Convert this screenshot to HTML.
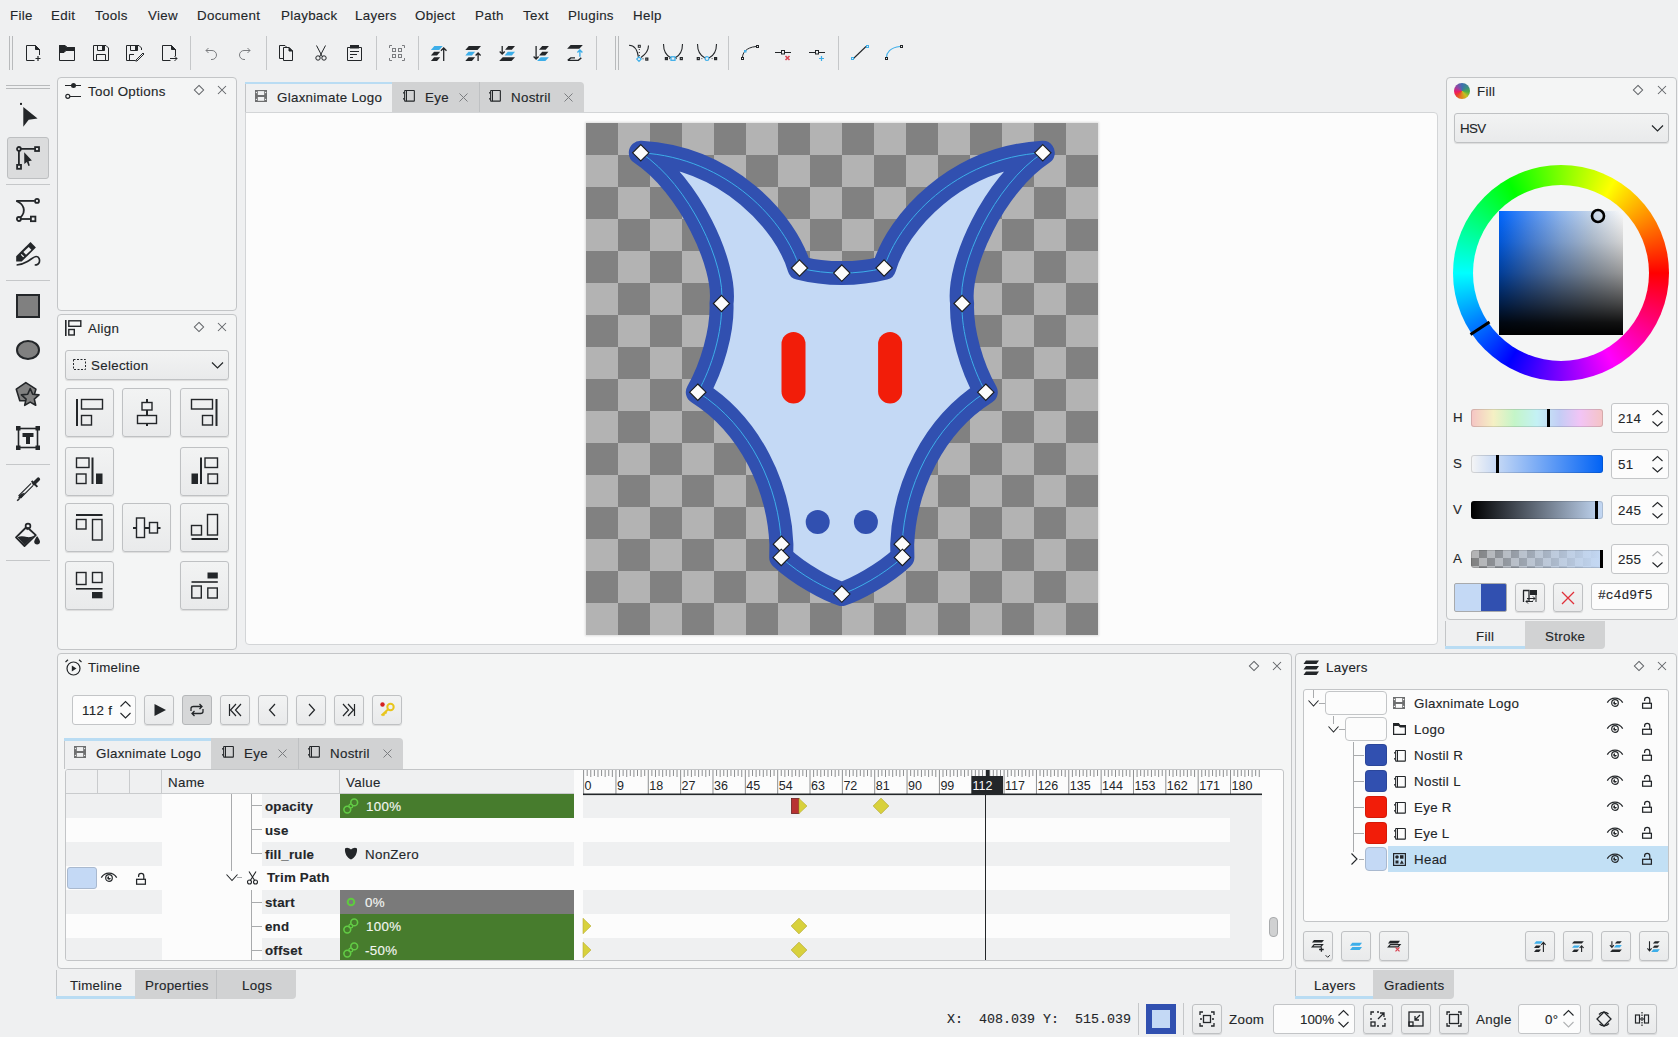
<!DOCTYPE html>
<html><head><meta charset="utf-8">
<style>
*{box-sizing:border-box;margin:0;padding:0}
html,body{width:1678px;height:1037px;overflow:hidden;background:#eff0f1;font-family:"Liberation Sans",sans-serif;font-size:13.33px;color:#232629}
.a{position:absolute}
.t{position:absolute;line-height:16px;white-space:nowrap;letter-spacing:0.3px;-webkit-text-stroke:0.12px currentColor}
.dock{position:absolute;background:#f4f5f5;border:1px solid #c3c5c7;border-radius:4px}
.btn{position:absolute;border:1px solid #bfc1c3;border-radius:3px;background:linear-gradient(#f2f3f3,#e9eaeb);box-shadow:0 1px 1px rgba(0,0,0,0.10)}
.tabi{position:absolute;background:#d1d2d3}
.sep{position:absolute;background:#c5c7c9;width:1px}
svg{position:absolute;overflow:visible}
.ic{fill:none;stroke:#232629;stroke-width:1}
</style></head><body>

<!-- MENU BAR -->
<div class="t" style="left:10px;top:8px">File</div>
<div class="t" style="left:51px;top:8px">Edit</div>
<div class="t" style="left:95px;top:8px">Tools</div>
<div class="t" style="left:148px;top:8px">View</div>
<div class="t" style="left:197px;top:8px">Document</div>
<div class="t" style="left:281px;top:8px">Playback</div>
<div class="t" style="left:355px;top:8px">Layers</div>
<div class="t" style="left:415px;top:8px">Object</div>
<div class="t" style="left:475px;top:8px">Path</div>
<div class="t" style="left:523px;top:8px">Text</div>
<div class="t" style="left:568px;top:8px">Plugins</div>
<div class="t" style="left:633px;top:8px">Help</div>


<!-- TOOLBAR -->
<div class="a" style="left:9px;top:36px;width:1px;height:34px;background:#b8babc"></div>
<div class="a" style="left:12px;top:36px;width:1px;height:34px;background:#b8babc"></div>
<div class="sep" style="left:190px;top:36px;height:34px"></div>
<div class="sep" style="left:266px;top:36px;height:34px"></div>
<div class="sep" style="left:376px;top:36px;height:34px"></div>
<div class="sep" style="left:418px;top:36px;height:34px"></div>
<div class="sep" style="left:596px;top:36px;height:34px"></div>
<div class="a" style="left:615px;top:36px;width:1px;height:34px;background:#b8babc"></div>
<div class="a" style="left:618px;top:36px;width:1px;height:34px;background:#b8babc"></div>
<div class="sep" style="left:728px;top:36px;height:34px"></div>
<div class="sep" style="left:838px;top:36px;height:34px"></div>

<svg style="left:26px;top:45px" width="16" height="16" viewBox="0 0 16 16" class="ic"><path d="M8.5 15.5H0.5V0.5H9.5L13.5 4.5V10"/><path d="M9.5 0.5V4.5H13.5Z" fill="#232629"/><path d="M12 11V16M9.5 13.5H14.5" stroke-width="1.2"/></svg>
<svg style="left:59px;top:45px" width="16" height="16" viewBox="0 0 16 16" class="ic"><path d="M0.5 15.5V0.5H6L8 2.5H15.5V15.5Z"/><path d="M0.5 0.5H6L8 2.5H15.5V5.5H7L5 7.5H0.5Z" fill="#232629"/></svg>
<svg style="left:93px;top:45px" width="16" height="16" viewBox="0 0 16 16" class="ic"><path d="M0.5 0.5H13L15.5 3V15.5H0.5Z"/><path d="M4.5 0.5V5.5H11.5V0.5"/><rect x="9" y="1" width="2.5" height="4.5" fill="#232629" stroke="none"/><path d="M3.5 15.5V9.5H12.5V15.5"/></svg>
<svg style="left:126px;top:45px" width="18" height="16" viewBox="0 0 18 16" class="ic"><path d="M9 15.5H0.5V0.5H13L15.5 3V5"/><path d="M4.5 0.5V5.5H11.5V0.5"/><rect x="9" y="1" width="2.5" height="4.5" fill="#232629" stroke="none"/><path d="M3.5 15.5V9.5H8"/><path d="M10 15L17 8L18 9L11 16L9.5 16Z" stroke-width="1"/></svg>
<svg style="left:162px;top:45px" width="16" height="16" viewBox="0 0 16 16" class="ic"><path d="M8.5 15.5H0.5V0.5H9.5L13.5 4.5V11"/><path d="M9.5 0.5V4.5H13.5Z" fill="#232629"/><path d="M8 13.5H15M12.5 11L15 13.5L12.5 16"/></svg>

<svg style="left:203px;top:45px" width="16" height="16" viewBox="0 0 16 16" class="ic" style="stroke:#7b7d80"><path d="M3 5.5H9A4.5 4.5 0 0 1 9 14.5H8M5.5 3L3 5.5L5.5 8" stroke="#7b7d80"/></svg>
<svg style="left:237px;top:45px" width="16" height="16" viewBox="0 0 16 16" class="ic"><path d="M13 5.5H7A4.5 4.5 0 0 0 7 14.5H8M10.5 3L13 5.5L10.5 8" stroke="#7b7d80"/></svg>

<svg style="left:279px;top:45px" width="16" height="16" viewBox="0 0 16 16" class="ic"><path d="M4.5 13.5H0.5V0.5H6L8 2.5"/><path d="M4.5 15.5V2.5H10L13.5 6V15.5Z"/><path d="M10 2.5V6H13.5Z" fill="#232629"/></svg>
<svg style="left:313px;top:45px" width="16" height="16" viewBox="0 0 16 16" class="ic"><path d="M3.5 0.5L9.5 12M12.5 0.5L6.5 12"/><circle cx="5" cy="13" r="2.2"/><circle cx="11" cy="13" r="2.2"/></svg>
<svg style="left:347px;top:45px" width="16" height="16" viewBox="0 0 16 16" class="ic"><path d="M0.5 2.5H14.5V15.5H0.5Z"/><rect x="3" y="0" width="9" height="3.5" fill="#232629" stroke="none"/><path d="M3 6.5H12M3 9.5H10M3 12.5H6"/></svg>
<svg style="left:389px;top:45px" width="16" height="16" viewBox="0 0 16 16" class="ic" stroke="#7b7d80"><path d="M0.5 3V0.5H3M13 0.5H15.5V3M15.5 13V15.5H13M3 15.5H0.5V13" stroke="#7b7d80"/><rect x="3.5" y="3.5" width="3" height="3" stroke="#7b7d80"/><rect x="9.5" y="3.5" width="3" height="3" stroke="#7b7d80"/><rect x="3.5" y="9.5" width="3" height="3" stroke="#7b7d80"/><rect x="9.5" y="9.5" width="3" height="3" stroke="#7b7d80"/></svg>

<svg style="left:425px;top:38px" width="170" height="30" viewBox="425 38 170 30"><path d="M434.4 46.0H442.7L439.2 50.0H430.9Z" fill="#3daee9"/><path d="M434.1 51.8H440.2L437.0 55.5H430.9Z" fill="#232629"/><path d="M434.1 57.3H440.2L437.0 61.0H430.9Z" fill="#232629"/><path d="M443.7 61.1V48M440.9 50.8L443.7 48L446.5 50.8" fill="none" stroke="#232629" stroke-width="1.3"/><path d="M468.8 46.0H481.0L477.5 50.0H465.3Z" fill="#232629"/><path d="M468.5 51.8H475.1L471.9 55.5H465.3Z" fill="#3daee9"/><path d="M468.5 57.3H475.1L471.9 61.0H465.3Z" fill="#232629"/><path d="M478.1 61.1V53M475.6 55.5L478.1 53L480.6 55.5" fill="none" stroke="#232629" stroke-width="1.3"/><path d="M508.3 46.0H515.0L511.8 49.8H505.1Z" fill="#232629"/><path d="M507.8 51.8H515.0L511.8 55.5H504.6Z" fill="#3daee9"/><path d="M502.7 57.3H515.0L511.5 61.0H499.2Z" fill="#232629"/><path d="M502.2 45.9V54M499.7 51.5L502.2 54L504.7 51.5" fill="none" stroke="#232629" stroke-width="1.3"/><path d="M542.2 46.0H548.9L545.7 49.8H539.0Z" fill="#232629"/><path d="M542.2 51.8H548.4L545.2 55.5H539.0Z" fill="#232629"/><path d="M540.6 57.3H548.9L545.4 61.0H537.1Z" fill="#3daee9"/><path d="M536.1 45.9V59M533.6 56.5L536.1 59L538.6 56.5" fill="none" stroke="#232629" stroke-width="1.3"/><path d="M570.6 45.0H582.8L579.3 48.8H567.1Z" fill="#232629"/><path d="M567.8 60.4L570.8 57.9H575M581.3 57.9L578.3 60.4H567.8" fill="none" stroke="#232629" stroke-width="1.4"/><path d="M579.9 56.7V50M577.4 52.5L579.9 50L582.4 52.5" fill="none" stroke="#3daee9" stroke-width="1.4"/></svg>
<svg style="left:625px;top:38px" width="100" height="30" viewBox="625 38 100 30" fill="none" stroke="#232629" stroke-width="1.1">
<path d="M629 45.3C634 45.3 637.5 50 638.5 57.5"/><path d="M641 57.5C646 54 648.5 50 648.5 45.5"/>
<rect x="638.3" y="45.3" width="2" height="2" stroke-width="1"/><path d="M639.3 49V50M639.3 52V53M639.3 55V56" stroke-width="1"/>
<path d="M639 56.9L641.2 59.1L639 61.3L636.8 59.1Z" stroke="#3daee9" stroke-width="1.2"/>
<path d="M642.5 58.8H643.5" stroke-width="1"/><rect x="645.8" y="58.1" width="2" height="2" stroke-width="1.2"/>
<path d="M663.5 44C663.5 50 666 55.5 671 58M682.5 44C682.5 50 680 55.5 675 58"/>
<rect x="671" y="56.8" width="4" height="3.5" stroke="#3daee9" stroke-width="1.3"/>
<rect x="665.4" y="57.6" width="2" height="2" stroke-width="1.2"/><rect x="680.3" y="57.6" width="2" height="2" stroke-width="1.2"/>
<path d="M669 58.6H669.8M676.3 58.6H677" stroke-width="1"/>
<path d="M697.5 44C697.5 50 700 55.5 705 58M716.5 44C716.5 50 714 55.5 709 58"/>
<circle cx="707" cy="58.6" r="1.9" stroke="#3daee9" stroke-width="1.2"/>
<rect x="697.3" y="57.6" width="2" height="2" stroke-width="1.2"/><rect x="714.6" y="57.6" width="2" height="2" stroke-width="1.2"/>
<path d="M701.5 58.6H702.3M711.7 58.6H712.5" stroke-width="1"/>
</svg>
<svg style="left:741px;top:45px" width="18" height="16" viewBox="0 0 18 16" class="ic"><path d="M1.5 12.5C1.5 8 5 2.5 15 1.5"/><rect x="0.5" y="12.5" width="2" height="2" stroke-width="1"/><rect x="15.5" y="0.5" width="2" height="2"/><rect x="3.5" y="5.5" width="1.5" height="1.5" stroke="#3daee9"/></svg>
<svg style="left:775px;top:46px" width="18" height="16" viewBox="0 0 18 16" class="ic"><path d="M0 6.5H6M10 6.5H16"/><rect x="6.5" y="4.5" width="3" height="3.5"/><path d="M10.5 10L14.5 14M14.5 10L10.5 14" stroke="#da4453" stroke-width="1.6"/></svg>
<svg style="left:809px;top:46px" width="18" height="16" viewBox="0 0 18 16" class="ic"><path d="M0 6.5H6M10 6.5H16"/><rect x="6.5" y="4.5" width="3" height="3.5"/><path d="M12.5 10V15M10 12.5H15" stroke="#3daee9" stroke-width="1.2"/></svg>

<svg style="left:851px;top:45px" width="18" height="16" viewBox="0 0 18 16" class="ic"><path d="M2.5 13.5L15 1.5" stroke-width="1.1"/><rect x="0.5" y="12.5" width="2" height="2" stroke="#3daee9"/><rect x="15.5" y="0.5" width="2" height="2" stroke="#3daee9"/></svg>
<svg style="left:885px;top:45px" width="18" height="16" viewBox="0 0 18 16" class="ic"><path d="M1.5 12.5C1.5 8 5 2.5 15 1.5" stroke="#3daee9" stroke-width="1.1"/><rect x="0.5" y="12.5" width="2" height="2"/><rect x="15.5" y="0.5" width="2" height="2"/></svg>


<!-- LEFT TOOLBOX -->
<div class="a" style="left:6px;top:85px;width:44px;height:1px;background:#b8babc"></div>
<div class="a" style="left:6px;top:88px;width:44px;height:1px;background:#b8babc"></div>
<svg style="left:12px;top:100px" width="32" height="32" viewBox="0 0 32 32"><rect x="8" y="2.9" width="2" height="2" fill="#232629"/><path d="M11.3 7.1L25.6 18.5L16.7 19.75L11.3 26.7Z" fill="#232629"/></svg>
<div class="a" style="left:7px;top:137px;width:42px;height:42px;background:#dbdcdd;border:1px solid #bdbfc1;border-radius:3px"></div>
<svg style="left:12px;top:142px" width="32" height="32" viewBox="0 0 32 32" fill="none" stroke="#232629" stroke-width="1.8"><circle cx="6.9" cy="6.9" r="1.9"/><path d="M8.8 6.9H23M6.9 8.8V23"/><rect x="23.1" y="5.1" width="3.9" height="3.9"/><rect x="5.1" y="22.9" width="3.9" height="3.9"/><path d="M12.2 10.3L19.9 18.5L16.6 19.2L17.8 23.4L16.4 23.9L14.9 19.9L12.3 22Z" fill="#232629" stroke="none"/></svg>
<div class="a" style="left:6px;top:184px;width:44px;height:1px;background:#c5c7c9"></div>
<svg style="left:12px;top:194px" width="32" height="32" viewBox="0 0 32 32" fill="none" stroke="#232629" stroke-width="1.8"><path d="M4.3 6.9H22.6"/><circle cx="25" cy="6.9" r="2"/><path d="M4.3 7C11.5 9.8 15 17 8.3 23.6"/><circle cx="6.9" cy="25" r="2"/><path d="M9 25H18.8"/><rect x="18.9" y="22.6" width="4.5" height="4.6"/></svg>
<svg style="left:12px;top:238px" width="32" height="32" viewBox="0 0 32 32"><path d="M4.2 18.2L18.5 4L23.9 9.6L9.7 23.6H4.2Z" fill="#232629"/><path d="M16.7 9L19.4 11.7L14 16.8L11.4 14Z" fill="#eff0f1"/><path d="M9.6 16L12.2 18.5L11.1 19.3L8.8 16.8Z" fill="#eff0f1"/><path d="M4.6 27C9 26.8 12 25.5 15.4 23.5C19 21.5 22 18.5 24.1 18.5C27 18.5 28 21.6 27.4 24C26.8 26.2 25 27 22.7 27" fill="none" stroke="#232629" stroke-width="1.7"/></svg>
<div class="a" style="left:6px;top:280px;width:44px;height:1px;background:#c5c7c9"></div>
<div class="a" style="left:16px;top:294px;width:24px;height:24px;background:#808080;border:2px solid #232629"></div>
<svg style="left:16px;top:339px" width="24" height="22" viewBox="0 0 24 22"><ellipse cx="12" cy="11" rx="11" ry="9" fill="#808080" stroke="#232629" stroke-width="2"/></svg>
<svg style="left:15px;top:381px" width="26" height="26" viewBox="0 0 26 26"><path d="M10.8 1.6L20.9 8.2L17.5 19.8H4.8L1.3 8.2Z" fill="#808080" stroke="#232629" stroke-width="1.6" stroke-linejoin="round"/><path d="M15.2 7.5L17.7 13.3L24.0 13.9L19.3 18.1L20.7 24.3L15.2 21.1L9.7 24.3L11.1 18.1L6.4 13.9L12.7 13.3Z" fill="#808080" stroke="#232629" stroke-width="1.6" stroke-linejoin="round"/></svg>
<svg style="left:15px;top:425px" width="26" height="26" viewBox="0 0 26 26"><rect x="3.5" y="3.5" width="19" height="19" fill="none" stroke="#232629" stroke-width="1.6"/><rect x="1" y="1" width="4.5" height="4.5" fill="#232629"/><rect x="20.5" y="1" width="4.5" height="4.5" fill="#232629"/><rect x="1" y="20.5" width="4.5" height="4.5" fill="#232629"/><rect x="20.5" y="20.5" width="4.5" height="4.5" fill="#232629"/><path d="M7.5 8H18.5V12H15V19H11V12H7.5Z" fill="#232629"/></svg>
<div class="a" style="left:6px;top:464px;width:44px;height:1px;background:#c5c7c9"></div>
<svg style="left:12px;top:474px" width="32" height="32" viewBox="12 474 32 32"><path d="M34 483.5L38.3 479.2" stroke="#232629" stroke-width="3.6" stroke-linecap="round"/><path d="M31.6 481L37.4 486.8" stroke="#232629" stroke-width="1.9"/><path d="M33.2 485.4L21 497.6L18.9 495.5L31.1 483.3" fill="none" stroke="#232629" stroke-width="1.1"/><path d="M24.5 492.5L21.5 497.8L19.4 499L18.2 497.7L19.4 495.6Z" fill="#232629"/><path d="M20.5 494.5C22 493.5 23.5 493 25 493L21.3 497.4Z" fill="#232629"/><path d="M17.2 500.8L19.3 498.7" stroke="#232629" stroke-width="1.6"/></svg>
<svg style="left:12px;top:518px" width="32" height="32" viewBox="12 518 32 32"><circle cx="28" cy="526" r="2.4" fill="none" stroke="#232629" stroke-width="1.7"/><path d="M26.5 529.5L28 528L35.8 535.2L24.5 546L16 537.3L26.5 527" fill="none" stroke="#232629" stroke-width="1.8" stroke-linejoin="round"/><path d="M17.5 537.3C21 535.5 24 536.5 27 537C30 537.5 32 536.5 34.2 535.8L24.5 545Z" fill="#232629"/><path d="M37.1 536C37.1 536 34.2 540 34.2 541.8C34.2 543.5 35.5 544.6 37.1 544.6C38.7 544.6 40 543.5 40 541.8C40 540 37.1 536 37.1 536Z" fill="#232629"/></svg>
<div class="a" style="left:6px;top:560px;width:44px;height:1px;background:#c5c7c9"></div>

<!-- TOOL OPTIONS DOCK -->
<div class="dock" style="left:57px;top:77px;width:180px;height:234px"></div>
<div class="t" style="left:88px;top:84px">Tool Options</div>
<svg style="left:65px;top:82px" width="17" height="17" viewBox="0 0 17 17"><path d="M0 3.5H16M4 14.5H16" stroke="#232629" stroke-width="1.2"/><circle cx="8.5" cy="3.5" r="2.5" fill="#232629"/><circle cx="2.8" cy="14.3" r="2" fill="#f4f5f5" stroke="#232629" stroke-width="1.2"/></svg>
<svg style="left:194px;top:85px" width="10" height="10" viewBox="0 0 10 10"><path d="M5 0.4L9.6 5L5 9.6L0.4 5Z" fill="none" stroke="#5f6266" stroke-width="1.05"/></svg>
<svg style="left:217px;top:85px" width="10" height="10" viewBox="0 0 10 10"><path d="M1 1L9 9M9 1L1 9" stroke="#5f6266" stroke-width="1.05"/></svg>


<!-- ALIGN DOCK -->
<div class="dock" style="left:57px;top:314px;width:180px;height:336px"></div>
<div class="t" style="left:88px;top:321px">Align</div>
<svg style="left:65px;top:319px" width="17" height="17" viewBox="0 0 17 17"><rect x="0" y="1" width="1.6" height="16" fill="#232629"/><rect x="3.8" y="1.8" width="12" height="5.5" fill="none" stroke="#232629" stroke-width="1.4"/><rect x="3.8" y="10.5" width="5.5" height="5.5" fill="none" stroke="#232629" stroke-width="1.4"/></svg>
<svg style="left:194px;top:322px" width="10" height="10" viewBox="0 0 10 10"><path d="M5 0.4L9.6 5L5 9.6L0.4 5Z" fill="none" stroke="#5f6266" stroke-width="1.05"/></svg>
<svg style="left:217px;top:322px" width="10" height="10" viewBox="0 0 10 10"><path d="M1 1L9 9M9 1L1 9" stroke="#5f6266" stroke-width="1.05"/></svg>
<div class="btn" style="left:65px;top:350px;width:164px;height:30px"></div>
<svg style="left:73px;top:359px" width="14" height="12" viewBox="0 0 14 12"><rect x="0.5" y="0.5" width="12" height="10" fill="none" stroke="#232629" stroke-width="1" stroke-dasharray="2 1.5"/></svg>
<div class="t" style="left:91px;top:358px">Selection</div>
<svg style="left:211px;top:361px" width="13" height="9" viewBox="0 0 13 9"><path d="M1 1.5L6.5 7L12 1.5" fill="none" stroke="#232629" stroke-width="1.2"/></svg>
<div class="btn" style="left:65px;top:388px;width:49px;height:49px"></div><svg style="left:65px;top:388px" width="49" height="49" viewBox="0 0 49 49"><rect x="11" y="11" width="2" height="27" fill="#232629"/><rect x="16.5" y="11.5" width="21" height="9.5" fill="none" stroke="#232629" stroke-width="1.4"/><rect x="16.5" y="27.5" width="10" height="9.5" fill="none" stroke="#232629" stroke-width="1.4"/></svg>
<div class="btn" style="left:122px;top:388px;width:49px;height:49px"></div><svg style="left:122px;top:388px" width="49" height="49" viewBox="0 0 49 49"><rect x="24" y="11" width="2" height="27" fill="#232629"/><rect x="20" y="14.5" width="10" height="7.5" fill="#f0f1f2" fill="none" stroke="#232629" stroke-width="1.4"/><rect x="15.5" y="27.5" width="19" height="8" fill="#eeeff0" fill="none" stroke="#232629" stroke-width="1.4"/></svg>
<div class="btn" style="left:180px;top:388px;width:49px;height:49px"></div><svg style="left:180px;top:388px" width="49" height="49" viewBox="0 0 49 49"><rect x="35.5" y="11" width="2" height="27" fill="#232629"/><rect x="11.5" y="11.5" width="21" height="9.5" fill="none" stroke="#232629" stroke-width="1.4"/><rect x="22.5" y="27.5" width="10" height="9.5" fill="none" stroke="#232629" stroke-width="1.4"/></svg>
<div class="btn" style="left:65px;top:447px;width:49px;height:49px"></div><svg style="left:65px;top:447px" width="49" height="49" viewBox="0 0 49 49"><rect x="11.5" y="11" width="12.5" height="9.5" fill="none" stroke="#232629" stroke-width="1.4"/><rect x="11.5" y="27" width="9.5" height="9.5" fill="none" stroke="#232629" stroke-width="1.4"/><rect x="26.5" y="10.5" width="2" height="26.5" fill="#232629"/><rect x="31" y="26.5" width="6.5" height="10.5" fill="#232629"/></svg>
<div class="btn" style="left:180px;top:447px;width:49px;height:49px"></div><svg style="left:180px;top:447px" width="49" height="49" viewBox="0 0 49 49"><rect x="11.5" y="26.5" width="6.5" height="10.5" fill="#232629"/><rect x="20" y="10.5" width="2" height="26.5" fill="#232629"/><rect x="25" y="11" width="12.5" height="9.5" fill="none" stroke="#232629" stroke-width="1.4"/><rect x="28" y="27" width="9.5" height="9.5" fill="none" stroke="#232629" stroke-width="1.4"/></svg>
<div class="btn" style="left:65px;top:503px;width:49px;height:49px"></div><svg style="left:65px;top:503px" width="49" height="49" viewBox="0 0 49 49"><rect x="11" y="11" width="26.5" height="2" fill="#232629"/><rect x="11.5" y="16.5" width="9.5" height="9.5" fill="none" stroke="#232629" stroke-width="1.4"/><rect x="27.5" y="16.5" width="9.5" height="20.5" fill="none" stroke="#232629" stroke-width="1.4"/></svg>
<div class="btn" style="left:122px;top:503px;width:49px;height:49px"></div><svg style="left:122px;top:503px" width="49" height="49" viewBox="0 0 49 49"><rect x="11" y="24" width="27.5" height="2" fill="#232629"/><rect x="14.5" y="15" width="8" height="19.5" fill="#f0f1f2" fill="none" stroke="#232629" stroke-width="1.4"/><rect x="27.5" y="19.5" width="8" height="10.5" fill="#eeeff0" fill="none" stroke="#232629" stroke-width="1.4"/></svg>
<div class="btn" style="left:180px;top:503px;width:49px;height:49px"></div><svg style="left:180px;top:503px" width="49" height="49" viewBox="0 0 49 49"><rect x="11.5" y="35" width="26.5" height="2" fill="#232629"/><rect x="11.5" y="22.5" width="10" height="9.5" fill="none" stroke="#232629" stroke-width="1.4"/><rect x="27.5" y="11.5" width="10" height="20.5" fill="none" stroke="#232629" stroke-width="1.4"/></svg>
<div class="btn" style="left:65px;top:561px;width:49px;height:49px"></div><svg style="left:65px;top:561px" width="49" height="49" viewBox="0 0 49 49"><rect x="11.5" y="11.5" width="9.5" height="12" fill="none" stroke="#232629" stroke-width="1.4"/><rect x="27.5" y="11.5" width="9.5" height="10" fill="none" stroke="#232629" stroke-width="1.4"/><rect x="11" y="27" width="26.5" height="1.6" fill="#232629"/><rect x="27" y="31" width="10.5" height="6.3" fill="#232629"/></svg>
<div class="btn" style="left:180px;top:561px;width:49px;height:49px"></div><svg style="left:180px;top:561px" width="49" height="49" viewBox="0 0 49 49"><rect x="27.5" y="11.5" width="10.3" height="6" fill="#232629"/><rect x="11.5" y="20.2" width="26.3" height="1.6" fill="#232629"/><rect x="11.8" y="25" width="9.5" height="12" fill="none" stroke="#232629" stroke-width="1.4"/><rect x="27.8" y="27" width="9.5" height="10" fill="none" stroke="#232629" stroke-width="1.4"/></svg>


<!-- CANVAS TABS -->
<div class="a" style="left:245px;top:82px;width:147px;height:31px;background:#eff0f1;border-left:1px solid #c3c5c7"></div>
<div class="a" style="left:245px;top:82px;width:147px;height:2px;background:#b9dcf3"></div>
<div class="tabi" style="left:392px;top:82px;width:192px;height:31px;border-radius:0 4px 0 0"></div>
<div class="a" style="left:479px;top:82px;width:1px;height:31px;background:#bfc1c3"></div>
<div class="t" style="left:277px;top:90px">Glaxnimate Logo</div><svg style="left:255px;top:90px" width="12" height="12" viewBox="0 0 12 12"><rect x="0" y="0" width="12" height="12" fill="#6e6f70"/><rect x="2.8" y="1.1" width="6.4" height="3.9" fill="#eff0f1"/><rect x="2.8" y="7" width="6.4" height="3.8" fill="#eff0f1"/><circle cx="1.4" cy="2.5" r="0.65" fill="#eff0f1"/><circle cx="1.4" cy="9.4" r="0.65" fill="#eff0f1"/><circle cx="10.6" cy="2.5" r="0.65" fill="#eff0f1"/><circle cx="10.6" cy="9.4" r="0.65" fill="#eff0f1"/></svg><svg style="left:402px;top:90px" width="13" height="12" viewBox="0 0 13 12"><rect x="2.65" y="0.55" width="9.7" height="10.6" rx="0.4" fill="none" stroke="#232629" stroke-width="1.1"/><path d="M4.5 0.5V11.2" stroke="#232629" stroke-width="1"/><rect x="1" y="2.2" width="1.4" height="1.3" fill="#232629"/><rect x="1" y="8.2" width="1.4" height="1.3" fill="#232629"/></svg><svg style="left:459px;top:93px" width="9" height="9" viewBox="0 0 9 9"><path d="M0.5 0.5L8.5 8.5M8.5 0.5L0.5 8.5" stroke="#7b7d80" stroke-width="1"/></svg><svg style="left:488px;top:90px" width="13" height="12" viewBox="0 0 13 12"><rect x="2.65" y="0.55" width="9.7" height="10.6" rx="0.4" fill="none" stroke="#232629" stroke-width="1.1"/><path d="M4.5 0.5V11.2" stroke="#232629" stroke-width="1"/><rect x="1" y="2.2" width="1.4" height="1.3" fill="#232629"/><rect x="1" y="8.2" width="1.4" height="1.3" fill="#232629"/></svg><svg style="left:564px;top:93px" width="9" height="9" viewBox="0 0 9 9"><path d="M0.5 0.5L8.5 8.5M8.5 0.5L0.5 8.5" stroke="#7b7d80" stroke-width="1"/></svg>
<div class="t" style="left:425px;top:90px">Eye</div>
<div class="t" style="left:511px;top:90px">Nostril</div>

<!-- CANVAS VIEW -->
<div class="a" style="left:245px;top:112px;width:1193px;height:533px;background:#fcfcfc;border:1px solid #d3d5d7;border-radius:0 4px 4px 4px"></div>


<!-- CANVAS -->
<div class="a" style="left:586px;top:123px;width:512px;height:512px;box-shadow:0 0 2px 1px rgba(0,0,0,0.12)"></div>
<svg style="left:586px;top:123px" width="512" height="512" viewBox="0 0 512 512">
<defs><pattern id="chk" width="64" height="64" patternUnits="userSpaceOnUse"><rect width="64" height="64" fill="#b3b3b3"/><rect width="32" height="32" fill="#818181"/><rect x="32" y="32" width="32" height="32" fill="#818181"/></pattern></defs>
<rect width="512" height="512" fill="url(#chk)"/>
<path d="M255.8 150.1C242.0 150.1 227.0 148.5 213.5 145.0C200.1 99.6 142.4 34.8 54.8 29.8C103.4 61.7 140.5 142.2 135.5 180.5C136.6 208.1 125.9 244.5 111.8 269.2C165.3 303.0 193.1 365.0 195.4 421.2L195.2 434.4C214.2 452.0 242.0 466.7 255.8 471.1C269.6 466.7 297.4 452.0 316.4 434.4L316.2 421.2C318.5 365.0 346.3 303.0 399.8 269.2C385.7 244.5 375.0 208.1 376.1 180.5C371.1 142.2 408.2 61.7 456.8 29.8C369.2 34.8 311.5 99.6 298.1 145.0C284.6 148.5 269.6 150.1 255.8 150.1Z" fill="#c4d9f5" stroke="#3150b0" stroke-width="24" stroke-linejoin="round"/>
<rect x="195.5" y="209" width="24" height="71.5" rx="12" fill="#f21d09"/>
<rect x="292.1" y="209" width="24" height="71.5" rx="12" fill="#f21d09"/>
<circle cx="231.7" cy="398.9" r="12" fill="#3150b0"/>
<circle cx="279.9" cy="398.9" r="12" fill="#3150b0"/>
<path d="M255.8 150.1C242.0 150.1 227.0 148.5 213.5 145.0C200.1 99.6 142.4 34.8 54.8 29.8C103.4 61.7 140.5 142.2 135.5 180.5C136.6 208.1 125.9 244.5 111.8 269.2C165.3 303.0 193.1 365.0 195.4 421.2L195.2 434.4C214.2 452.0 242.0 466.7 255.8 471.1C269.6 466.7 297.4 452.0 316.4 434.4L316.2 421.2C318.5 365.0 346.3 303.0 399.8 269.2C385.7 244.5 375.0 208.1 376.1 180.5C371.1 142.2 408.2 61.7 456.8 29.8C369.2 34.8 311.5 99.6 298.1 145.0C284.6 148.5 269.6 150.1 255.8 150.1Z" fill="none" stroke="#3daee9" stroke-width="1"/>
<g fill="#fcfcfc" stroke="#1a1c1e" stroke-width="1.1"><path d="M255.8 141.9L264.0 150.1L255.8 158.3L247.6 150.1Z"/><path d="M213.5 136.8L221.7 145.0L213.5 153.2L205.3 145.0Z"/><path d="M54.8 21.6L63.0 29.8L54.8 38.0L46.6 29.8Z"/><path d="M135.5 172.3L143.7 180.5L135.5 188.7L127.3 180.5Z"/><path d="M111.8 261.0L120.0 269.2L111.8 277.4L103.6 269.2Z"/><path d="M195.4 413.0L203.6 421.2L195.4 429.4L187.2 421.2Z"/><path d="M195.2 426.2L203.4 434.4L195.2 442.6L187.0 434.4Z"/><path d="M255.8 462.9L264.0 471.1L255.8 479.3L247.6 471.1Z"/><path d="M298.1 136.8L306.3 145.0L298.1 153.2L289.9 145.0Z"/><path d="M456.8 21.6L465.0 29.8L456.8 38.0L448.6 29.8Z"/><path d="M376.1 172.3L384.3 180.5L376.1 188.7L367.9 180.5Z"/><path d="M399.8 261.0L408.0 269.2L399.8 277.4L391.6 269.2Z"/><path d="M316.2 413.0L324.4 421.2L316.2 429.4L308.0 421.2Z"/><path d="M316.4 426.2L324.6 434.4L316.4 442.6L308.2 434.4Z"/></g>
</svg>

<!-- FILL DOCK -->
<div class="dock" style="left:1446px;top:77px;width:231px;height:543px"></div>
<div class="t" style="left:1477px;top:84px">Fill</div>
<div class="a" style="left:1454px;top:83px;width:16px;height:16px;border-radius:50%;background:conic-gradient(from 0deg,#3d6fb0,#3a8f80 60deg,#52b043 100deg,#c8c020 140deg,#e08020 190deg,#e84030 230deg,#f01860 260deg,#a040a0 300deg,#3d6fb0 360deg)"></div>
<svg style="left:1633px;top:85px" width="10" height="10" viewBox="0 0 10 10"><path d="M5 0.4L9.6 5L5 9.6L0.4 5Z" fill="none" stroke="#5f6266" stroke-width="1.05"/></svg>
<svg style="left:1657px;top:85px" width="10" height="10" viewBox="0 0 10 10"><path d="M1 1L9 9M9 1L1 9" stroke="#5f6266" stroke-width="1.05"/></svg>
<div class="btn" style="left:1454px;top:113px;width:215px;height:30px"></div>
<div class="t" style="left:1460px;top:121px;letter-spacing:-0.6px">HSV</div>
<svg style="left:1651px;top:124px" width="13" height="9" viewBox="0 0 13 9"><path d="M1 1.5L6.5 7L12 1.5" fill="none" stroke="#232629" stroke-width="1.2"/></svg>
<div class="a" style="left:1453px;top:165px;width:216px;height:216px;border-radius:50%;background:conic-gradient(from 90deg,#f00,#f0f,#00f,#0ff,#0f0,#ff0,#f00)"></div>
<div class="a" style="left:1473px;top:185px;width:176px;height:176px;border-radius:50%;background:#f4f5f5"></div>
<div class="a" style="left:1499px;top:211px;width:124px;height:124px;background:linear-gradient(to bottom,rgba(0,0,0,0),rgba(0,0,0,0.16) 25%,rgba(0,0,0,0.4) 50%,rgba(0,0,0,0.72) 75%,rgba(0,0,0,0.93) 90%,#000),linear-gradient(to right,#0066ff,#4d8ef2 25%,#8fb6ee 50%,#c6d6ea 75%,#fafafa)"></div>
<svg style="left:1440px;top:150px" width="238" height="240" viewBox="1440 150 238 240"><circle cx="1598" cy="216" r="6" fill="none" stroke="#000" stroke-width="2.6"/><path d="M1470.5 334.5L1489.5 322" stroke="#000" stroke-width="3"/></svg>

<div class="t" style="left:1453px;top:410px">H</div>
<div class="t" style="left:1453px;top:456px">S</div>
<div class="t" style="left:1453px;top:502px">V</div>
<div class="t" style="left:1453px;top:551px">A</div>
<div class="a" style="left:1471px;top:409px;width:132px;height:18px;border-radius:3px;box-shadow:inset 0 0 0 1px rgba(0,0,0,0.13);background:linear-gradient(to right,#f5c4c4,#f5f0c4 17%,#c4f5c8 33%,#c4f1f5 50%,#c4cdf5 67%,#f2c4f5 83%,#f5c4c4)"></div>
<div class="a" style="left:1547px;top:409px;width:3px;height:18px;background:#000"></div>
<div class="a" style="left:1471px;top:455px;width:132px;height:18px;border-radius:3px;box-shadow:inset 0 0 0 1px rgba(0,0,0,0.13);background:linear-gradient(to right,#f5f5f5,#0062f5)"></div>
<div class="a" style="left:1496px;top:455px;width:3px;height:18px;background:#000"></div>
<div class="a" style="left:1471px;top:501px;width:132px;height:18px;border-radius:3px;box-shadow:inset 0 0 0 1px rgba(0,0,0,0.13);background:linear-gradient(to right,#000,#c4d9f5)"></div>
<div class="a" style="left:1595px;top:501px;width:3px;height:18px;background:#000"></div>
<div class="a" style="left:1471px;top:550px;width:132px;height:18px;border-radius:3px;box-shadow:inset 0 0 0 1px rgba(0,0,0,0.13);background:linear-gradient(to right,rgba(196,217,245,0),#c4d9f5),conic-gradient(#808080 25%,#b3b3b3 25% 50%,#808080 50% 75%,#b3b3b3 75%) 0 0/16px 16px"></div>
<div class="a" style="left:1600px;top:550px;width:3px;height:18px;background:#000"></div>
<div class="a" style="left:1611px;top:403px;width:58px;height:30px;background:#fcfcfc;border:1px solid #c3c5c7;border-radius:3px"></div><div class="t" style="left:1618px;top:411px">214</div><svg style="left:1651px;top:409px" width="13" height="19" viewBox="0 0 13 19"><path d="M1.5 6L6.5 1.5L11.5 6" fill="none" stroke="#232629" stroke-width="1.1"/><path d="M1.5 12.5L6.5 17L11.5 12.5" fill="none" stroke="#232629" stroke-width="1.1"/></svg>
<div class="a" style="left:1611px;top:449px;width:58px;height:30px;background:#fcfcfc;border:1px solid #c3c5c7;border-radius:3px"></div><div class="t" style="left:1618px;top:457px">51</div><svg style="left:1651px;top:455px" width="13" height="19" viewBox="0 0 13 19"><path d="M1.5 6L6.5 1.5L11.5 6" fill="none" stroke="#232629" stroke-width="1.1"/><path d="M1.5 12.5L6.5 17L11.5 12.5" fill="none" stroke="#232629" stroke-width="1.1"/></svg>
<div class="a" style="left:1611px;top:495px;width:58px;height:30px;background:#fcfcfc;border:1px solid #c3c5c7;border-radius:3px"></div><div class="t" style="left:1618px;top:503px">245</div><svg style="left:1651px;top:501px" width="13" height="19" viewBox="0 0 13 19"><path d="M1.5 6L6.5 1.5L11.5 6" fill="none" stroke="#232629" stroke-width="1.1"/><path d="M1.5 12.5L6.5 17L11.5 12.5" fill="none" stroke="#232629" stroke-width="1.1"/></svg>
<div class="a" style="left:1611px;top:544px;width:58px;height:30px;background:#fcfcfc;border:1px solid #c3c5c7;border-radius:3px"></div><div class="t" style="left:1618px;top:552px">255</div><svg style="left:1651px;top:550px" width="13" height="19" viewBox="0 0 13 19"><path d="M1.5 6L6.5 1.5L11.5 6" fill="none" stroke="#b0b2b4" stroke-width="1.1"/><path d="M1.5 12.5L6.5 17L11.5 12.5" fill="none" stroke="#232629" stroke-width="1.1"/></svg>

<div class="a" style="left:1454px;top:583px;width:53px;height:29px;border:1px solid #a8aaac;border-radius:2px;background:linear-gradient(to right,#c4d9f5 50%,#3150b0 50%)"></div>
<div class="btn" style="left:1515px;top:583px;width:30px;height:29px"></div>
<svg style="left:1522px;top:589px" width="16" height="16" viewBox="0 0 16 16"><path d="M1 1.5H7V13M1.5 1.5V13" fill="none" stroke="#232629" stroke-width="1.3"/><rect x="8" y="1" width="7" height="5" fill="#232629"/><path d="M14 1.5V13M5 9.5H13M11 7.5L13 9.5L11 11.5M11 12.5H4M6 10.5L4 12.5L6 14.5" fill="none" stroke="#232629" stroke-width="1"/></svg>
<div class="btn" style="left:1553px;top:583px;width:30px;height:29px"></div>
<svg style="left:1560px;top:590px" width="16" height="16" viewBox="0 0 16 16"><path d="M2 2L14 14M14 2L2 14" stroke="#e0303a" stroke-width="1.3"/></svg>
<div class="a" style="left:1591px;top:583px;width:78px;height:27px;background:#fcfcfc;border:1px solid #c3c5c7;border-radius:3px"></div>
<div class="t" style="left:1598px;top:588px;font-family:'Liberation Mono',monospace;font-size:13px;letter-spacing:0">#c4d9f5</div>
<div class="a" style="left:1445px;top:621px;width:80px;height:28px;background:#eff0f1;border-left:1px solid #c3c5c7"></div>
<div class="a" style="left:1445px;top:646px;width:80px;height:3px;background:#b9dcf3"></div>
<div class="tabi" style="left:1525px;top:621px;width:80px;height:28px;border-radius:0 0 4px 0"></div>
<div class="t" style="left:1476px;top:629px">Fill</div>
<div class="t" style="left:1545px;top:629px">Stroke</div>


<!-- TIMELINE DOCK -->
<div class="dock" style="left:57px;top:653px;width:1235px;height:316px"></div>
<div class="t" style="left:88px;top:660px">Timeline</div>
<svg style="left:65px;top:659px" width="17" height="17" viewBox="0 0 17 17"><circle cx="8.5" cy="9.5" r="6.5" fill="none" stroke="#232629" stroke-width="1.2"/><path d="M6.8 6.5L11.5 9.5L6.8 12.5Z" fill="#232629"/><path d="M0.5 3L3 0.8M16.5 3L14 0.8" stroke="#232629" stroke-width="1.2"/></svg>
<svg style="left:1249px;top:661px" width="10" height="10" viewBox="0 0 10 10"><path d="M5 0.4L9.6 5L5 9.6L0.4 5Z" fill="none" stroke="#5f6266" stroke-width="1.05"/></svg>
<svg style="left:1272px;top:661px" width="10" height="10" viewBox="0 0 10 10"><path d="M1 1L9 9M9 1L1 9" stroke="#5f6266" stroke-width="1.05"/></svg>
<div class="a" style="left:72px;top:695px;width:64px;height:30px;background:#fcfcfc;border:1px solid #c3c5c7;border-radius:3px"></div>
<div class="t" style="left:82px;top:703px">112 f</div>
<svg style="left:119px;top:700px" width="13" height="20" viewBox="0 0 13 20"><path d="M1.5 6.5L6.5 1.5L11.5 6.5M1.5 13L6.5 18L11.5 13" fill="none" stroke="#232629" stroke-width="1.1"/></svg>
<div class="btn" style="left:144px;top:695px;width:30px;height:30px"></div><div class="a" style="left:182px;top:695px;width:30px;height:30px;background:#d6d7d8;border:1px solid #b5b7b9;border-radius:3px"></div><div class="btn" style="left:220px;top:695px;width:30px;height:30px"></div><div class="btn" style="left:258px;top:695px;width:30px;height:30px"></div><div class="btn" style="left:296px;top:695px;width:30px;height:30px"></div><div class="btn" style="left:334px;top:695px;width:30px;height:30px"></div><div class="btn" style="left:372px;top:695px;width:30px;height:30px"></div>
<svg style="left:152px;top:702px" width="16" height="16" viewBox="0 0 16 16"><path d="M2.5 2L14 8L2.5 14Z" fill="#232629"/></svg>
<svg style="left:189px;top:702px" width="16" height="16" viewBox="0 0 16 16" fill="none" stroke="#232629" stroke-width="1.3"><path d="M2 9V6.5C2 5 3 4.5 4.5 4.5H13M10.5 2L13 4.5L10.5 7M14 7V9.5C14 11 13 11.5 11.5 11.5H3M5.5 9L3 11.5L5.5 14"/></svg>
<svg style="left:227px;top:702px" width="16" height="16" viewBox="0 0 16 16" fill="none" stroke="#232629" stroke-width="1.2"><path d="M2.5 2V14M9 2L3.5 8L9 14M14 2L8.5 8L14 14"/></svg>
<svg style="left:265px;top:702px" width="16" height="16" viewBox="0 0 16 16" fill="none" stroke="#232629" stroke-width="1.2"><path d="M10 2L4.5 8L10 14"/></svg>
<svg style="left:303px;top:702px" width="16" height="16" viewBox="0 0 16 16" fill="none" stroke="#232629" stroke-width="1.2"><path d="M6 2L11.5 8L6 14"/></svg>
<svg style="left:341px;top:702px" width="16" height="16" viewBox="0 0 16 16" fill="none" stroke="#232629" stroke-width="1.2"><path d="M2 2L7.5 8L2 14M7 2L12.5 8L7 14M13.5 2V14"/></svg>
<svg style="left:379px;top:701px" width="17" height="17" viewBox="0 0 17 17"><circle cx="3.5" cy="3.5" r="2.2" fill="#d42020"/><circle cx="11.5" cy="6" r="3.2" fill="none" stroke="#e8c51c" stroke-width="2"/><path d="M9.5 8L2.5 14.5M4 13L5.5 14.5M6 11L7.5 12.5" stroke="#e8c51c" stroke-width="2"/></svg>

<!-- timeline tabs -->
<div class="a" style="left:64px;top:738px;width:147px;height:31px;background:#eff0f1;border-left:1px solid #c3c5c7"></div>
<div class="a" style="left:64px;top:738px;width:147px;height:3px;background:#b9dcf3"></div>
<div class="tabi" style="left:211px;top:738px;width:192px;height:31px;border-radius:0 4px 0 0"></div>
<div class="a" style="left:298px;top:738px;width:1px;height:31px;background:#bfc1c3"></div>
<div class="t" style="left:96px;top:746px">Glaxnimate Logo</div>
<div class="t" style="left:244px;top:746px">Eye</div>
<div class="t" style="left:330px;top:746px">Nostril</div>
<svg style="left:74px;top:746px" width="12" height="12" viewBox="0 0 12 12"><rect x="0" y="0" width="12" height="12" fill="#6e6f70"/><rect x="2.8" y="1.1" width="6.4" height="3.9" fill="#eff0f1"/><rect x="2.8" y="7" width="6.4" height="3.8" fill="#eff0f1"/><circle cx="1.4" cy="2.5" r="0.65" fill="#eff0f1"/><circle cx="1.4" cy="9.4" r="0.65" fill="#eff0f1"/><circle cx="10.6" cy="2.5" r="0.65" fill="#eff0f1"/><circle cx="10.6" cy="9.4" r="0.65" fill="#eff0f1"/></svg><svg style="left:221px;top:746px" width="13" height="12" viewBox="0 0 13 12"><rect x="2.65" y="0.55" width="9.7" height="10.6" rx="0.4" fill="none" stroke="#232629" stroke-width="1.1"/><path d="M4.5 0.5V11.2" stroke="#232629" stroke-width="1"/><rect x="1" y="2.2" width="1.4" height="1.3" fill="#232629"/><rect x="1" y="8.2" width="1.4" height="1.3" fill="#232629"/></svg><svg style="left:278px;top:749px" width="9" height="9" viewBox="0 0 9 9"><path d="M0.5 0.5L8.5 8.5M8.5 0.5L0.5 8.5" stroke="#7b7d80" stroke-width="1"/></svg><svg style="left:307px;top:746px" width="13" height="12" viewBox="0 0 13 12"><rect x="2.65" y="0.55" width="9.7" height="10.6" rx="0.4" fill="none" stroke="#232629" stroke-width="1.1"/><path d="M4.5 0.5V11.2" stroke="#232629" stroke-width="1"/><rect x="1" y="2.2" width="1.4" height="1.3" fill="#232629"/><rect x="1" y="8.2" width="1.4" height="1.3" fill="#232629"/></svg><svg style="left:383px;top:749px" width="9" height="9" viewBox="0 0 9 9"><path d="M0.5 0.5L8.5 8.5M8.5 0.5L0.5 8.5" stroke="#7b7d80" stroke-width="1"/></svg>


<!-- TABLE -->
<div class="a" style="left:65px;top:769px;width:1219px;height:192px;background:#fcfcfc;border:1px solid #c3c5c7;border-radius:3px;overflow:hidden">
 <div class="a" style="left:0;top:0;width:508px;height:24px;background:#eff0f1;border-bottom:1px solid #c9cbcd"></div>
 <div class="a" style="left:31px;top:0;width:1px;height:24px;background:#c9cbcd"></div>
 <div class="a" style="left:63px;top:0;width:1px;height:24px;background:#c9cbcd"></div>
 <div class="a" style="left:95px;top:0;width:1px;height:24px;background:#c9cbcd"></div>
 <div class="a" style="left:273px;top:0;width:1px;height:24px;background:#c9cbcd"></div>
<div class="a" style="left:0;top:24px;width:96px;height:24px;background:#eff0f1"></div><div class="a" style="left:196px;top:24px;width:312px;height:24px;background:#eff0f1"></div><div class="a" style="left:0;top:72px;width:96px;height:24px;background:#eff0f1"></div><div class="a" style="left:196px;top:72px;width:312px;height:24px;background:#eff0f1"></div><div class="a" style="left:0;top:120px;width:96px;height:24px;background:#eff0f1"></div><div class="a" style="left:196px;top:120px;width:312px;height:24px;background:#eff0f1"></div><div class="a" style="left:0;top:168px;width:96px;height:24px;background:#eff0f1"></div><div class="a" style="left:196px;top:168px;width:312px;height:24px;background:#eff0f1"></div><div class="a" style="left:517px;top:24px;width:679px;height:168px;background:#eff0f1"></div><div class="a" style="left:517px;top:48px;width:647px;height:24px;background:#fcfcfc"></div><div class="a" style="left:517px;top:96px;width:647px;height:24px;background:#fcfcfc"></div><div class="a" style="left:517px;top:144px;width:647px;height:24px;background:#fcfcfc"></div><div class="a" style="left:274px;top:24px;width:234px;height:24px;background:#477c2d"></div><div class="a" style="left:274px;top:120px;width:234px;height:24px;background:#7a7a7a"></div><div class="a" style="left:274px;top:144px;width:234px;height:24px;background:#477c2d"></div><div class="a" style="left:274px;top:168px;width:234px;height:24px;background:#477c2d"></div></div>
<div class="t" style="left:168px;top:775px">Name</div><div class="t" style="left:346px;top:775px">Value</div>
<div class="a" style="left:231px;top:794px;width:1px;height:77px;background:#a9abad"></div><div class="a" style="left:251px;top:794px;width:1px;height:60px;background:#a9abad"></div><div class="a" style="left:251px;top:890px;width:1px;height:70px;background:#a9abad"></div><div class="a" style="left:251px;top:805px;width:11px;height:1px;background:#a9abad"></div><div class="a" style="left:251px;top:829px;width:11px;height:1px;background:#a9abad"></div><div class="a" style="left:251px;top:853px;width:11px;height:1px;background:#a9abad"></div><div class="a" style="left:251px;top:902px;width:11px;height:1px;background:#a9abad"></div><div class="a" style="left:251px;top:926px;width:11px;height:1px;background:#a9abad"></div><div class="a" style="left:251px;top:950px;width:11px;height:1px;background:#a9abad"></div><div class="a" style="left:237px;top:877px;width:5px;height:1px;background:#a9abad"></div><div class="t" style="left:265px;top:799px;font-weight:bold;letter-spacing:0.2px">opacity</div><div class="t" style="left:265px;top:823px;font-weight:bold;letter-spacing:0.2px">use</div><div class="t" style="left:265px;top:847px;font-weight:bold;letter-spacing:0.2px">fill_rule</div><div class="t" style="left:265px;top:895px;font-weight:bold;letter-spacing:0.2px">start</div><div class="t" style="left:265px;top:919px;font-weight:bold;letter-spacing:0.2px">end</div><div class="t" style="left:265px;top:943px;font-weight:bold;letter-spacing:0.2px">offset</div><div class="t" style="left:267px;top:870px;font-weight:bold;letter-spacing:0.2px">Trim Path</div><svg style="left:343px;top:798px" width="16" height="16" viewBox="0 0 16 16" fill="none" stroke="#62cc45" stroke-width="1.6"><circle cx="11.2" cy="4.4" r="3.4"/><circle cx="4.3" cy="11.6" r="3.4"/><circle cx="7.8" cy="8" r="1.9" stroke-width="1.2"/></svg><div class="t" style="left:366px;top:799px;color:#f4f6f2">100%</div><svg style="left:344px;top:847px" width="14" height="13" viewBox="0 0 14 13"><path d="M1 1.5C3 0 5 1 7 2.5C9 1 11 0 13 1.5C13.5 6 11 11 7 12.5C3 11 0.5 6 1 1.5Z" fill="#232629"/></svg><div class="t" style="left:365px;top:847px">NonZero</div><svg style="left:246px;top:871px" width="14" height="14" viewBox="0 0 14 14" fill="none" stroke="#232629" stroke-width="1.1"><path d="M3 0.5L9 10M10 0.5L4 10"/><circle cx="3.5" cy="11" r="2"/><circle cx="9.5" cy="11" r="2"/></svg><svg style="left:226px;top:874px" width="12" height="8" viewBox="0 0 12 8"><path d="M0.5 0.5L6 6.5L11.5 0.5" fill="none" stroke="#232629" stroke-width="1.1"/></svg><svg style="left:345px;top:896px" width="12" height="12" viewBox="0 0 12 12"><circle cx="6" cy="6" r="3.3" fill="none" stroke="#5fcb3f" stroke-width="2"/></svg><div class="t" style="left:365px;top:895px;color:#f4f6f2">0%</div><svg style="left:343px;top:918px" width="16" height="16" viewBox="0 0 16 16" fill="none" stroke="#62cc45" stroke-width="1.6"><circle cx="11.2" cy="4.4" r="3.4"/><circle cx="4.3" cy="11.6" r="3.4"/><circle cx="7.8" cy="8" r="1.9" stroke-width="1.2"/></svg><div class="t" style="left:366px;top:919px;color:#f4f6f2">100%</div><svg style="left:343px;top:942px" width="16" height="16" viewBox="0 0 16 16" fill="none" stroke="#62cc45" stroke-width="1.6"><circle cx="11.2" cy="4.4" r="3.4"/><circle cx="4.3" cy="11.6" r="3.4"/><circle cx="7.8" cy="8" r="1.9" stroke-width="1.2"/></svg><div class="t" style="left:365px;top:943px;color:#f4f6f2">-50%</div><div class="a" style="left:67px;top:867px;width:30px;height:22px;background:#c4d9f5;border:1px solid #a9b9cf;border-radius:3px"></div><svg style="left:101px;top:872px" width="17" height="12" viewBox="0 0 17 12"><path d="M0.3 5.7C4 -0.3 12 -0.3 15.7 5.7" fill="none" stroke="#232629" stroke-width="1.25"/><circle cx="8" cy="6" r="3.3" fill="none" stroke="#232629" stroke-width="1.2"/><path d="M8 4.2V6H9.8A1.8 1.8 0 1 1 8 4.2Z" fill="#232629"/></svg><svg style="left:135px;top:872px" width="12" height="13" viewBox="0 0 12 13" fill="none" stroke="#232629" stroke-width="1.25"><rect x="1.6" y="7.3" width="8.8" height="4.9"/><path d="M3.6 5V3.9A2.6 2.6 0 0 1 8.8 3.9V7.3"/></svg><svg style="left:583px;top:770px" width="680" height="26" viewBox="0 0 680 26"><rect x="0" y="0" width="679" height="24" fill="#fcfcfc"/><path d="M0.60 0V24M4.19 0V6M7.79 0V7M11.38 0V6M14.98 0V7M18.57 0V6M22.16 0V7M25.76 0V6M29.35 0V7M32.95 0V24M36.54 0V7M40.13 0V6M43.73 0V7M47.32 0V6M50.92 0V7M54.51 0V6M58.10 0V7M61.70 0V6M65.29 0V24M68.89 0V6M72.48 0V7M76.07 0V6M79.67 0V7M83.26 0V6M86.86 0V7M90.45 0V6M94.04 0V7M97.64 0V24M101.23 0V7M104.83 0V6M108.42 0V7M112.01 0V6M115.61 0V7M119.20 0V6M122.80 0V7M126.39 0V6M129.98 0V24M133.58 0V6M137.17 0V7M140.77 0V6M144.36 0V7M147.95 0V6M151.55 0V7M155.14 0V6M158.74 0V7M162.33 0V24M165.92 0V7M169.52 0V6M173.11 0V7M176.71 0V6M180.30 0V7M183.89 0V6M187.49 0V7M191.08 0V6M194.68 0V24M198.27 0V6M201.86 0V7M205.46 0V6M209.05 0V7M212.65 0V6M216.24 0V7M219.83 0V6M223.43 0V7M227.02 0V24M230.62 0V7M234.21 0V6M237.80 0V7M241.40 0V6M244.99 0V7M248.59 0V6M252.18 0V7M255.77 0V6M259.37 0V24M262.96 0V6M266.56 0V7M270.15 0V6M273.74 0V7M277.34 0V6M280.93 0V7M284.53 0V6M288.12 0V7M291.71 0V24M295.31 0V7M298.90 0V6M302.50 0V7M306.09 0V6M309.68 0V7M313.28 0V6M316.87 0V7M320.47 0V6M324.06 0V24M327.65 0V6M331.25 0V7M334.84 0V6M338.44 0V7M342.03 0V6M345.62 0V7M349.22 0V6M352.81 0V7M356.41 0V24M360.00 0V7M363.59 0V6M367.19 0V7M370.78 0V6M374.38 0V7M377.97 0V6M381.56 0V7M385.16 0V6M388.75 0V24M392.35 0V6M395.94 0V7M399.53 0V6M403.13 0V7M406.72 0V6M410.32 0V7M413.91 0V6M417.50 0V7M421.10 0V24M424.69 0V7M428.29 0V6M431.88 0V7M435.47 0V6M439.07 0V7M442.66 0V6M446.26 0V7M449.85 0V6M453.44 0V24M457.04 0V6M460.63 0V7M464.23 0V6M467.82 0V7M471.41 0V6M475.01 0V7M478.60 0V6M482.20 0V7M485.79 0V24M489.38 0V7M492.98 0V6M496.57 0V7M500.17 0V6M503.76 0V7M507.35 0V6M510.95 0V7M514.54 0V6M518.14 0V24M521.73 0V6M525.32 0V7M528.92 0V6M532.51 0V7M536.11 0V6M539.70 0V7M543.29 0V6M546.89 0V7M550.48 0V24M554.08 0V7M557.67 0V6M561.26 0V7M564.86 0V6M568.45 0V7M572.05 0V6M575.64 0V7M579.23 0V6M582.83 0V24M586.42 0V6M590.02 0V7M593.61 0V6M597.20 0V7M600.80 0V6M604.39 0V7M607.99 0V6M611.58 0V7M615.17 0V24M618.77 0V7M622.36 0V6M625.96 0V7M629.55 0V6M633.14 0V7M636.74 0V6M640.33 0V7M643.93 0V6M647.52 0V24M651.11 0V6M654.71 0V7M658.30 0V6M661.90 0V7M665.49 0V6M669.08 0V7M672.68 0V6M676.27 0V7" stroke="#8d8f91" stroke-width="1"/><rect x="0" y="23.5" width="679" height="1.6" fill="#232629"/><text x="1.6" y="19.5" font-family="Liberation Sans" font-size="12.5" fill="#232629">0</text><text x="33.9" y="19.5" font-family="Liberation Sans" font-size="12.5" fill="#232629">9</text><text x="66.3" y="19.5" font-family="Liberation Sans" font-size="12.5" fill="#232629">18</text><text x="98.6" y="19.5" font-family="Liberation Sans" font-size="12.5" fill="#232629">27</text><text x="131.0" y="19.5" font-family="Liberation Sans" font-size="12.5" fill="#232629">36</text><text x="163.3" y="19.5" font-family="Liberation Sans" font-size="12.5" fill="#232629">45</text><text x="195.7" y="19.5" font-family="Liberation Sans" font-size="12.5" fill="#232629">54</text><text x="228.0" y="19.5" font-family="Liberation Sans" font-size="12.5" fill="#232629">63</text><text x="260.4" y="19.5" font-family="Liberation Sans" font-size="12.5" fill="#232629">72</text><text x="292.7" y="19.5" font-family="Liberation Sans" font-size="12.5" fill="#232629">81</text><text x="325.1" y="19.5" font-family="Liberation Sans" font-size="12.5" fill="#232629">90</text><text x="357.4" y="19.5" font-family="Liberation Sans" font-size="12.5" fill="#232629">99</text><text x="422.1" y="19.5" font-family="Liberation Sans" font-size="12.5" fill="#232629">117</text><text x="454.4" y="19.5" font-family="Liberation Sans" font-size="12.5" fill="#232629">126</text><text x="486.8" y="19.5" font-family="Liberation Sans" font-size="12.5" fill="#232629">135</text><text x="519.1" y="19.5" font-family="Liberation Sans" font-size="12.5" fill="#232629">144</text><text x="551.5" y="19.5" font-family="Liberation Sans" font-size="12.5" fill="#232629">153</text><text x="583.8" y="19.5" font-family="Liberation Sans" font-size="12.5" fill="#232629">162</text><text x="616.2" y="19.5" font-family="Liberation Sans" font-size="12.5" fill="#232629">171</text><text x="648.5" y="19.5" font-family="Liberation Sans" font-size="12.5" fill="#232629">180</text><rect x="388.5" y="6" width="31.5" height="18" fill="#232629"/><rect x="403" y="0" width="3.5" height="6" fill="#232629"/><text x="389.5" y="19.5" font-family="Liberation Sans" font-size="12.5" fill="#fcfcfc">112</text></svg><div class="a" style="left:985px;top:794px;width:1px;height:166px;background:#232629"></div><svg style="left:575px;top:790px" width="320" height="175" viewBox="575 790 320 175"><rect x="791.5" y="798.5" width="7.5" height="15" fill="#b83232" stroke="#6a2020" stroke-width="0.8"/><path d="M799 798.5L807 806L799 813.5Z" fill="#d8d13c" stroke="#b9ad35" stroke-width="0.6"/><path d="M881 798.2L888.8 806L881 813.8L873.2 806Z" fill="#d8d13c" stroke="#b9ad35" stroke-width="0.8"/><path d="M799 918.2L806.8 926L799 933.8L791.2 926Z" fill="#d8d13c" stroke="#b9ad35" stroke-width="0.8"/><path d="M799 942.2L806.8 950L799 957.8L791.2 950Z" fill="#d8d13c" stroke="#b9ad35" stroke-width="0.8"/><path d="M583 918.2L591 926L583 933.8Z" fill="#d8d13c" stroke="#b9ad35" stroke-width="0.6"/><path d="M583 942.2L591 950L583 957.8Z" fill="#d8d13c" stroke="#b9ad35" stroke-width="0.6"/></svg><div class="a" style="left:1269px;top:917px;width:9px;height:20px;background:#d0d1d2;border:1px solid #a9abad;border-radius:4px"></div>
<div class="a" style="left:56px;top:970px;width:79px;height:29px;background:#eff0f1;border-left:1px solid #c3c5c7"></div>
<div class="a" style="left:56px;top:996px;width:79px;height:3px;background:#b9dcf3"></div>
<div class="tabi" style="left:135px;top:970px;width:161px;height:29px;border-radius:0 0 4px 0"></div>
<div class="a" style="left:216px;top:970px;width:1px;height:29px;background:#bfc1c3"></div>
<div class="t" style="left:70px;top:978px">Timeline</div>
<div class="t" style="left:145px;top:978px">Properties</div>
<div class="t" style="left:242px;top:978px">Logs</div>

<!-- LAYERS DOCK -->
<div class="dock" style="left:1295px;top:653px;width:382px;height:316px"></div>
<div class="t" style="left:1326px;top:660px">Layers</div>
<svg style="left:1303px;top:660px" width="17" height="16" viewBox="0 0 17 16"><path d="M3 0.5H16L13.5 4H0.5ZM3 6H16L13.5 9.5H0.5ZM3 11.5H16L13.5 15H0.5Z" fill="#232629"/></svg>
<svg style="left:1634px;top:661px" width="10" height="10" viewBox="0 0 10 10"><path d="M5 0.4L9.6 5L5 9.6L0.4 5Z" fill="none" stroke="#5f6266" stroke-width="1.05"/></svg>
<svg style="left:1657px;top:661px" width="10" height="10" viewBox="0 0 10 10"><path d="M1 1L9 9M9 1L1 9" stroke="#5f6266" stroke-width="1.05"/></svg>
<div class="a" style="left:1303px;top:689px;width:366px;height:233px;background:#fcfcfc;border:1px solid #c3c5c7;border-radius:3px"></div>
<div class="a" style="left:1388px;top:846px;width:280px;height:26px;background:#c2e0f5"></div>
<div class="a" style="left:1313px;top:690px;width:1px;height:8px;background:#a9abad"></div>
<div class="a" style="left:1319px;top:703px;width:6px;height:1px;background:#a9abad"></div>
<div class="a" style="left:1333px;top:716px;width:1px;height:8px;background:#a9abad"></div>
<div class="a" style="left:1339px;top:729px;width:6px;height:1px;background:#a9abad"></div>
<div class="a" style="left:1353px;top:742px;width:1px;height:110px;background:#a9abad"></div>
<div class="a" style="left:1359px;top:859px;width:5px;height:1px;background:#a9abad"></div>
<svg style="left:1308px;top:700px" width="12" height="8" viewBox="0 0 12 8"><path d="M0.5 0.5L5.5 6L10.5 0.5" fill="none" stroke="#232629" stroke-width="1.1"/></svg>
<svg style="left:1328px;top:726px" width="12" height="8" viewBox="0 0 12 8"><path d="M0.5 0.5L5.5 6L10.5 0.5" fill="none" stroke="#232629" stroke-width="1.1"/></svg>
<svg style="left:1350px;top:853px" width="8" height="12" viewBox="0 0 8 12"><path d="M1.5 0.5L7 6L1.5 11.5" fill="none" stroke="#232629" stroke-width="1.1"/></svg>
<div class="a" style="left:1325px;top:691px;width:62px;height:24px;background:#fcfcfc;border:1px solid #c3c5c7;border-radius:4px"></div>
<div class="a" style="left:1345px;top:717px;width:42px;height:24px;background:#fcfcfc;border:1px solid #c3c5c7;border-radius:4px"></div>
<svg style="left:1393px;top:697px" width="12" height="12" viewBox="0 0 12 12"><rect x="0" y="0" width="12" height="12" fill="#6e6f70"/><rect x="2.8" y="1.1" width="6.4" height="3.9" fill="#fcfcfc"/><rect x="2.8" y="7" width="6.4" height="3.8" fill="#fcfcfc"/><circle cx="1.4" cy="2.5" r="0.65" fill="#fcfcfc"/><circle cx="1.4" cy="9.4" r="0.65" fill="#fcfcfc"/><circle cx="10.6" cy="2.5" r="0.65" fill="#fcfcfc"/><circle cx="10.6" cy="9.4" r="0.65" fill="#fcfcfc"/></svg><svg style="left:1393px;top:723px" width="13" height="12" viewBox="0 0 13 12"><path d="M0.6 0.6H5.5L7 2.5H12.4V11.4H0.6Z" fill="none" stroke="#232629" stroke-width="1.2"/><path d="M0.6 0.6H5.5L7 2.5H12.4V4.5H7L5.5 3H0.6Z" fill="#232629"/></svg><div class="t" style="left:1414px;top:696px">Glaxnimate Logo</div><svg style="left:1607px;top:697px" width="17" height="12" viewBox="0 0 17 12"><path d="M0.3 5.7C4 -0.3 12 -0.3 15.7 5.7" fill="none" stroke="#232629" stroke-width="1.25"/><circle cx="8" cy="6" r="3.3" fill="none" stroke="#232629" stroke-width="1.2"/><path d="M8 4.2V6H9.8A1.8 1.8 0 1 1 8 4.2Z" fill="#232629"/></svg><svg style="left:1641px;top:696px" width="12" height="13" viewBox="0 0 12 13" fill="none" stroke="#232629" stroke-width="1.25"><rect x="1.6" y="7.3" width="8.8" height="4.9"/><path d="M3.6 5V3.9A2.6 2.6 0 0 1 8.8 3.9V7.3"/></svg><div class="t" style="left:1414px;top:722px">Logo</div><svg style="left:1607px;top:723px" width="17" height="12" viewBox="0 0 17 12"><path d="M0.3 5.7C4 -0.3 12 -0.3 15.7 5.7" fill="none" stroke="#232629" stroke-width="1.25"/><circle cx="8" cy="6" r="3.3" fill="none" stroke="#232629" stroke-width="1.2"/><path d="M8 4.2V6H9.8A1.8 1.8 0 1 1 8 4.2Z" fill="#232629"/></svg><svg style="left:1641px;top:722px" width="12" height="13" viewBox="0 0 12 13" fill="none" stroke="#232629" stroke-width="1.25"><rect x="1.6" y="7.3" width="8.8" height="4.9"/><path d="M3.6 5V3.9A2.6 2.6 0 0 1 8.8 3.9V7.3"/></svg><div class="t" style="left:1414px;top:748px">Nostil R</div><svg style="left:1607px;top:749px" width="17" height="12" viewBox="0 0 17 12"><path d="M0.3 5.7C4 -0.3 12 -0.3 15.7 5.7" fill="none" stroke="#232629" stroke-width="1.25"/><circle cx="8" cy="6" r="3.3" fill="none" stroke="#232629" stroke-width="1.2"/><path d="M8 4.2V6H9.8A1.8 1.8 0 1 1 8 4.2Z" fill="#232629"/></svg><svg style="left:1641px;top:748px" width="12" height="13" viewBox="0 0 12 13" fill="none" stroke="#232629" stroke-width="1.25"><rect x="1.6" y="7.3" width="8.8" height="4.9"/><path d="M3.6 5V3.9A2.6 2.6 0 0 1 8.8 3.9V7.3"/></svg><div class="a" style="left:1365px;top:744px;width:22px;height:22px;background:#3150b0;border:1px solid rgba(0,0,0,0.12);border-radius:4px"></div><svg style="left:1393px;top:750px" width="13" height="12" viewBox="0 0 13 12"><rect x="2.65" y="0.55" width="9.7" height="10.6" rx="0.4" fill="none" stroke="#232629" stroke-width="1.1"/><path d="M4.5 0.5V11.2" stroke="#232629" stroke-width="1"/><rect x="1" y="2.2" width="1.4" height="1.3" fill="#232629"/><rect x="1" y="8.2" width="1.4" height="1.3" fill="#232629"/></svg><div class="a" style="left:1354px;top:755px;width:10px;height:1px;background:#a9abad"></div><div class="t" style="left:1414px;top:774px">Nostil L</div><svg style="left:1607px;top:775px" width="17" height="12" viewBox="0 0 17 12"><path d="M0.3 5.7C4 -0.3 12 -0.3 15.7 5.7" fill="none" stroke="#232629" stroke-width="1.25"/><circle cx="8" cy="6" r="3.3" fill="none" stroke="#232629" stroke-width="1.2"/><path d="M8 4.2V6H9.8A1.8 1.8 0 1 1 8 4.2Z" fill="#232629"/></svg><svg style="left:1641px;top:774px" width="12" height="13" viewBox="0 0 12 13" fill="none" stroke="#232629" stroke-width="1.25"><rect x="1.6" y="7.3" width="8.8" height="4.9"/><path d="M3.6 5V3.9A2.6 2.6 0 0 1 8.8 3.9V7.3"/></svg><div class="a" style="left:1365px;top:770px;width:22px;height:22px;background:#3150b0;border:1px solid rgba(0,0,0,0.12);border-radius:4px"></div><svg style="left:1393px;top:776px" width="13" height="12" viewBox="0 0 13 12"><rect x="2.65" y="0.55" width="9.7" height="10.6" rx="0.4" fill="none" stroke="#232629" stroke-width="1.1"/><path d="M4.5 0.5V11.2" stroke="#232629" stroke-width="1"/><rect x="1" y="2.2" width="1.4" height="1.3" fill="#232629"/><rect x="1" y="8.2" width="1.4" height="1.3" fill="#232629"/></svg><div class="a" style="left:1354px;top:781px;width:10px;height:1px;background:#a9abad"></div><div class="t" style="left:1414px;top:800px">Eye R</div><svg style="left:1607px;top:801px" width="17" height="12" viewBox="0 0 17 12"><path d="M0.3 5.7C4 -0.3 12 -0.3 15.7 5.7" fill="none" stroke="#232629" stroke-width="1.25"/><circle cx="8" cy="6" r="3.3" fill="none" stroke="#232629" stroke-width="1.2"/><path d="M8 4.2V6H9.8A1.8 1.8 0 1 1 8 4.2Z" fill="#232629"/></svg><svg style="left:1641px;top:800px" width="12" height="13" viewBox="0 0 12 13" fill="none" stroke="#232629" stroke-width="1.25"><rect x="1.6" y="7.3" width="8.8" height="4.9"/><path d="M3.6 5V3.9A2.6 2.6 0 0 1 8.8 3.9V7.3"/></svg><div class="a" style="left:1365px;top:796px;width:22px;height:22px;background:#f21d09;border:1px solid rgba(0,0,0,0.12);border-radius:4px"></div><svg style="left:1393px;top:802px" width="13" height="12" viewBox="0 0 13 12"><rect x="2.65" y="0.55" width="9.7" height="10.6" rx="0.4" fill="none" stroke="#232629" stroke-width="1.1"/><path d="M4.5 0.5V11.2" stroke="#232629" stroke-width="1"/><rect x="1" y="2.2" width="1.4" height="1.3" fill="#232629"/><rect x="1" y="8.2" width="1.4" height="1.3" fill="#232629"/></svg><div class="a" style="left:1354px;top:807px;width:10px;height:1px;background:#a9abad"></div><div class="t" style="left:1414px;top:826px">Eye L</div><svg style="left:1607px;top:827px" width="17" height="12" viewBox="0 0 17 12"><path d="M0.3 5.7C4 -0.3 12 -0.3 15.7 5.7" fill="none" stroke="#232629" stroke-width="1.25"/><circle cx="8" cy="6" r="3.3" fill="none" stroke="#232629" stroke-width="1.2"/><path d="M8 4.2V6H9.8A1.8 1.8 0 1 1 8 4.2Z" fill="#232629"/></svg><svg style="left:1641px;top:826px" width="12" height="13" viewBox="0 0 12 13" fill="none" stroke="#232629" stroke-width="1.25"><rect x="1.6" y="7.3" width="8.8" height="4.9"/><path d="M3.6 5V3.9A2.6 2.6 0 0 1 8.8 3.9V7.3"/></svg><div class="a" style="left:1365px;top:822px;width:22px;height:22px;background:#f21d09;border:1px solid rgba(0,0,0,0.12);border-radius:4px"></div><svg style="left:1393px;top:828px" width="13" height="12" viewBox="0 0 13 12"><rect x="2.65" y="0.55" width="9.7" height="10.6" rx="0.4" fill="none" stroke="#232629" stroke-width="1.1"/><path d="M4.5 0.5V11.2" stroke="#232629" stroke-width="1"/><rect x="1" y="2.2" width="1.4" height="1.3" fill="#232629"/><rect x="1" y="8.2" width="1.4" height="1.3" fill="#232629"/></svg><div class="a" style="left:1354px;top:833px;width:10px;height:1px;background:#a9abad"></div><div class="t" style="left:1414px;top:852px">Head</div><svg style="left:1607px;top:853px" width="17" height="12" viewBox="0 0 17 12"><path d="M0.3 5.7C4 -0.3 12 -0.3 15.7 5.7" fill="none" stroke="#232629" stroke-width="1.25"/><circle cx="8" cy="6" r="3.3" fill="none" stroke="#232629" stroke-width="1.2"/><path d="M8 4.2V6H9.8A1.8 1.8 0 1 1 8 4.2Z" fill="#232629"/></svg><svg style="left:1641px;top:852px" width="12" height="13" viewBox="0 0 12 13" fill="none" stroke="#232629" stroke-width="1.25"><rect x="1.6" y="7.3" width="8.8" height="4.9"/><path d="M3.6 5V3.9A2.6 2.6 0 0 1 8.8 3.9V7.3"/></svg><div class="a" style="left:1365px;top:847px;width:22px;height:24px;background:#c4d9f5;border:1px solid #a9b9cf;border-radius:4px"></div><svg style="left:1393px;top:853px" width="13" height="13" viewBox="0 0 13 13"><rect x="0.6" y="0.6" width="11.8" height="11.8" fill="none" stroke="#232629" stroke-width="1.2"/><circle cx="4" cy="4" r="1.8" fill="#232629"/><rect x="7" y="2.2" width="3.5" height="3.5" fill="#232629"/><rect x="2.5" y="7.5" width="3" height="3" fill="#232629"/><path d="M8.8 7.3L10.8 10.7H6.8Z" fill="#232629"/></svg><div class="btn" style="left:1303px;top:931px;width:30px;height:30px"></div><div class="btn" style="left:1341px;top:931px;width:30px;height:30px"></div><div class="btn" style="left:1379px;top:931px;width:30px;height:30px"></div><div class="btn" style="left:1525px;top:931px;width:30px;height:30px"></div><div class="btn" style="left:1563px;top:931px;width:30px;height:30px"></div><div class="btn" style="left:1601px;top:931px;width:30px;height:30px"></div><div class="btn" style="left:1639px;top:931px;width:30px;height:30px"></div>
<svg style="left:1300px;top:930px" width="378" height="32" viewBox="1300 930 378 32"><path d="M1314.0 940.0H1324.0L1322.0 942.6H1312.0Z" fill="#232629"/><path d="M1314.2 944.6H1322.5L1320.6 946.8H1312.3Z" fill="none" stroke="#232629" stroke-width="1.2"/><path d="M1321.4 947.2V951.8M1319.1 949.5H1323.7" stroke="#232629" stroke-width="1.3"/><path d="M1325.6 955.2L1327.7 957.3L1329.8 955.2" fill="none" stroke="#232629" stroke-width="1"/><path d="M1352.3 942.7H1362.0L1359.7 945.7H1350.0Z" fill="#3daee9"/><path d="M1352.3 947.0H1362.0L1359.7 950.0H1350.0Z" fill="#3daee9"/><path d="M1390.0 940.7H1400.0L1398.0 943.4H1388.0Z" fill="#232629"/><path d="M1390.4 944.6H1400L1398 946.8H1388.4Z" fill="none" stroke="#232629" stroke-width="1.2"/><path d="M1395.5 947.4L1399.5 951.4M1399.5 947.4L1395.5 951.4" stroke="#da4453" stroke-width="1.3"/><path d="M1536.2 941.2H1542.7L1540.6 943.8H1534.1Z" fill="#3daee9"/><path d="M1536.0 945.6H1541.0L1539.0 948.1H1534.0Z" fill="#232629"/><path d="M1536.0 949.4H1541.0L1539.0 952.0H1534.0Z" fill="#232629"/><path d="M1543.4 952V942.6M1541.2 944.8L1543.4 942.4L1545.6 944.8" fill="none" stroke="#232629" stroke-width="1.1"/><path d="M1574.0 941.2H1583.8L1581.8 943.6H1572.0Z" fill="#232629"/><path d="M1574.0 945.6H1580.0L1578.0 947.8H1572.0Z" fill="#3daee9"/><path d="M1574.0 949.4H1579.0L1577.0 952.0H1572.0Z" fill="#232629"/><path d="M1581.6 952V946M1579.6 948L1581.6 945.8L1583.6 948" fill="none" stroke="#232629" stroke-width="1.1"/><path d="M1616.9 941.2H1621.8L1619.8 943.5H1614.9Z" fill="#232629"/><path d="M1616.0 945.1H1621.8L1619.8 947.4H1614.0Z" fill="#3daee9"/><path d="M1612.3 949.4H1621.8L1619.6 952.0H1610.1Z" fill="#232629"/><path d="M1611.9 941.2V947.3M1609.9 945.2L1611.9 947.5L1613.9 945.2" fill="none" stroke="#232629" stroke-width="1.1"/><path d="M1654.9 941.2H1659.8L1657.8 943.5H1652.9Z" fill="#232629"/><path d="M1654.5 945.6H1659.4L1657.4 947.8H1652.5Z" fill="#232629"/><path d="M1653.4 949.2H1659.8L1657.6 952.0H1651.2Z" fill="#3daee9"/><path d="M1649.5 941.2V950.6M1647.4 948.4L1649.5 950.8L1651.6 948.4" fill="none" stroke="#232629" stroke-width="1.1"/></svg>
<div class="a" style="left:1295px;top:970px;width:78px;height:29px;background:#eff0f1;border-left:1px solid #c3c5c7"></div>
<div class="a" style="left:1295px;top:996px;width:78px;height:3px;background:#b9dcf3"></div>
<div class="tabi" style="left:1373px;top:970px;width:81px;height:29px;border-radius:0 0 4px 0"></div>
<div class="t" style="left:1314px;top:978px">Layers</div>
<div class="t" style="left:1384px;top:978px">Gradients</div>



<!-- STATUS BAR -->
<div class="t" style="left:947px;top:1012px;font-family:'Liberation Mono',monospace;font-size:13.33px;white-space:pre;letter-spacing:0">X:  408.039 Y:  515.039</div>
<div class="sep" style="left:1138px;top:1003px;height:32px"></div>
<div class="a" style="left:1146px;top:1004px;width:30px;height:30px;background:#c4d9f5;border:6px solid #3150b0"></div>
<div class="sep" style="left:1183px;top:1003px;height:32px"></div>
<div class="btn" style="left:1192px;top:1004px;width:30px;height:30px"></div>
<div class="t" style="left:1229px;top:1012px">Zoom</div>
<div class="a" style="left:1273px;top:1004px;width:82px;height:30px;background:#fcfcfc;border:1px solid #c3c5c7;border-radius:3px"></div>
<div class="t" style="left:1300px;top:1012px;letter-spacing:0">100%</div>
<svg style="left:1337px;top:1009px" width="13" height="20" viewBox="0 0 13 20"><path d="M1.5 6.5L6.5 1.5L11.5 6.5M1.5 13L6.5 18L11.5 13" fill="none" stroke="#232629" stroke-width="1.1"/></svg>
<div class="btn" style="left:1363px;top:1004px;width:30px;height:30px"></div>
<div class="btn" style="left:1401px;top:1004px;width:30px;height:30px"></div>
<div class="btn" style="left:1439px;top:1004px;width:30px;height:30px"></div>
<div class="t" style="left:1476px;top:1012px">Angle</div>
<div class="a" style="left:1518px;top:1004px;width:63px;height:30px;background:#fcfcfc;border:1px solid #c3c5c7;border-radius:3px"></div>
<div class="t" style="left:1545px;top:1012px">0°</div>
<svg style="left:1562px;top:1009px" width="13" height="20" viewBox="0 0 13 20"><path d="M1.5 6.5L6.5 1.5L11.5 6.5" fill="none" stroke="#232629" stroke-width="1.1"/><path d="M1.5 13L6.5 18L11.5 13" fill="none" stroke="#b0b2b4" stroke-width="1.1"/></svg>
<div class="btn" style="left:1589px;top:1004px;width:30px;height:30px"></div>
<div class="btn" style="left:1627px;top:1004px;width:30px;height:30px"></div>
<svg style="left:1199px;top:1011px" width="16" height="16" viewBox="0 0 16 16" fill="none" stroke="#232629" stroke-width="1.3"><path d="M1 4V1H4M12 1H15V4M15 12V15H12M4 15H1V12"/><rect x="4.5" y="4.5" width="7" height="7"/><path d="M1 8H3M13 8H15"/></svg>
<svg style="left:1370px;top:1011px" width="16" height="16" viewBox="0 0 16 16" fill="none" stroke="#232629" stroke-width="1.3"><path d="M1 4V1H4M7 1H9M1 7V9M15 12V15H12M9 15H7M15 7V9"/><rect x="1" y="11" width="4" height="4"/><path d="M8 8L14 2M10 2H14V6"/></svg>
<svg style="left:1408px;top:1011px" width="16" height="16" viewBox="0 0 16 16" fill="none" stroke="#232629" stroke-width="1.3"><rect x="1" y="1" width="14" height="14"/><rect x="1" y="11" width="4" height="4"/><path d="M12 4L7 9M7 5V9H11"/></svg>
<svg style="left:1446px;top:1011px" width="16" height="16" viewBox="0 0 16 16" fill="none" stroke="#232629" stroke-width="1.3"><path d="M1 4V1H4M12 1H15V4M15 12V15H12M4 15H1V12"/><rect x="3.5" y="3.5" width="9" height="9"/></svg>
<svg style="left:1596px;top:1011px" width="16" height="16" viewBox="0 0 16 16" fill="none" stroke="#232629" stroke-width="1.3"><path d="M8 1L15 8L8 15L1 8Z"/><path d="M3 3.5A6.5 6.5 0 0 1 12.5 3M13 12.5A6.5 6.5 0 0 1 3.5 13"/></svg>
<svg style="left:1634px;top:1011px" width="16" height="16" viewBox="0 0 16 16" fill="none" stroke="#232629" stroke-width="1.2"><rect x="1.5" y="4" width="4" height="8"/><rect x="10.5" y="4" width="4" height="8"/><path d="M8 1V15" stroke-dasharray="1.5 1"/><path d="M5.5 8H10.5"/></svg>

</body></html>
